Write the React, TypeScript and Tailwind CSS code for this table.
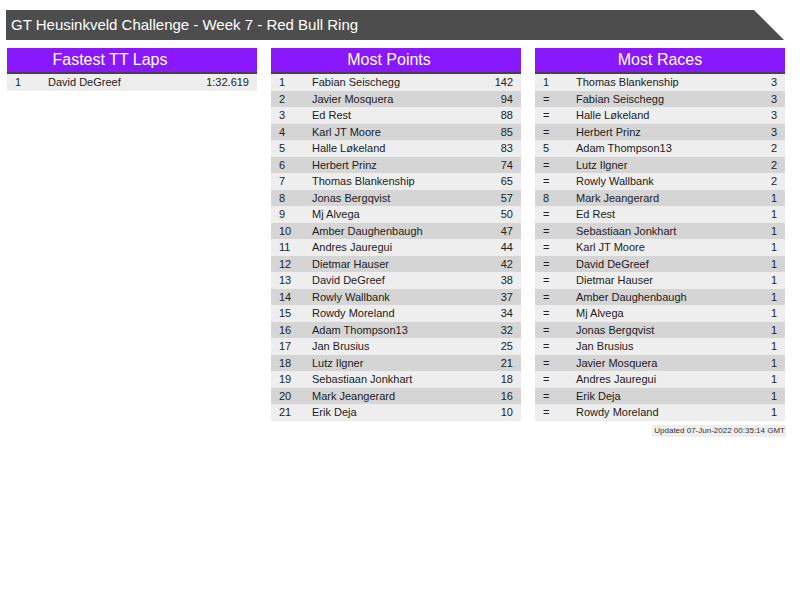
import React from 'react';

type Row = [string, string, string];

const fastest: Row[] = [['1', 'David DeGreef', '1:32.619']];

const points: Row[] = [
  ['1', 'Fabian Seischegg', '142'],
  ['2', 'Javier Mosquera', '94'],
  ['3', 'Ed Rest', '88'],
  ['4', 'Karl JT Moore', '85'],
  ['5', 'Halle Løkeland', '83'],
  ['6', 'Herbert Prinz', '74'],
  ['7', 'Thomas Blankenship', '65'],
  ['8', 'Jonas Bergqvist', '57'],
  ['9', 'Mj Alvega', '50'],
  ['10', 'Amber Daughenbaugh', '47'],
  ['11', 'Andres Jauregui', '44'],
  ['12', 'Dietmar Hauser', '42'],
  ['13', 'David DeGreef', '38'],
  ['14', 'Rowly Wallbank', '37'],
  ['15', 'Rowdy Moreland', '34'],
  ['16', 'Adam Thompson13', '32'],
  ['17', 'Jan Brusius', '25'],
  ['18', 'Lutz Ilgner', '21'],
  ['19', 'Sebastiaan Jonkhart', '18'],
  ['20', 'Mark Jeangerard', '16'],
  ['21', 'Erik Deja', '10'],
];

const races: Row[] = [
  ['1', 'Thomas Blankenship', '3'],
  ['=', 'Fabian Seischegg', '3'],
  ['=', 'Halle Løkeland', '3'],
  ['=', 'Herbert Prinz', '3'],
  ['5', 'Adam Thompson13', '2'],
  ['=', 'Lutz Ilgner', '2'],
  ['=', 'Rowly Wallbank', '2'],
  ['8', 'Mark Jeangerard', '1'],
  ['=', 'Ed Rest', '1'],
  ['=', 'Sebastiaan Jonkhart', '1'],
  ['=', 'Karl JT Moore', '1'],
  ['=', 'David DeGreef', '1'],
  ['=', 'Dietmar Hauser', '1'],
  ['=', 'Amber Daughenbaugh', '1'],
  ['=', 'Mj Alvega', '1'],
  ['=', 'Jonas Bergqvist', '1'],
  ['=', 'Jan Brusius', '1'],
  ['=', 'Javier Mosquera', '1'],
  ['=', 'Andres Jauregui', '1'],
  ['=', 'Erik Deja', '1'],
  ['=', 'Rowdy Moreland', '1'],
];

// heading titles sit a little left of centre in the original, by different amounts
function Table({ title, rows, titlePad }: { title: string; rows: Row[]; titlePad: string }) {
  return (
    <div className="w-[250px]">
      <div className={`h-[26px] bg-[#8a18ff] border-b-2 border-[#444] text-white text-[16px] leading-[24px] text-center ${titlePad}`}>
        {title}
      </div>
      {rows.map((r, i) => (
        <div
          key={i}
          className={`flex items-center h-[16.5px] text-[11px] text-[#222] ${i % 2 === 0 ? 'bg-[#eeeeee]' : 'bg-[#d5d5d5]'}`}
        >
          <span className="w-[41px] pl-[8px]">{r[0]}</span>
          <span className="flex-1">{r[1]}</span>
          <span className="pr-[8px]">{r[2]}</span>
        </div>
      ))}
    </div>
  );
}

export default function App() {
  return (
    <div className="w-[800px] h-[600px] bg-white font-['Liberation_Sans',Arial,sans-serif]">
      <div className="pt-[10px] pl-[6px]">
        <div className="w-[778px] h-[30px] bg-[#4d4d4d] text-white text-[15px] leading-[30px] pl-[5px] [clip-path:polygon(0_0,calc(100%-30px)_0,100%_100%,0_100%)]">
          GT Heusinkveld Challenge - Week 7 - Red Bull Ring
        </div>
      </div>
      <div className="flex gap-[14px] pl-[7px] mt-[8px] items-start">
        <Table title="Fastest TT Laps" rows={fastest} titlePad="pr-[44px]" />
        <Table title="Most Points" rows={points} titlePad="pr-[14px]" />
        <div className="flex flex-col items-end">
          <Table title="Most Races" rows={races} titlePad="pr-0" />
          <div className="mt-[4px] mr-[-1px] bg-[#eeeeee] text-[8px] leading-[12px] text-[#333] pl-[2px] pr-px">
            Updated 07-Jun-2022 00:35:14 GMT
          </div>
        </div>
      </div>
    </div>
  );
}
